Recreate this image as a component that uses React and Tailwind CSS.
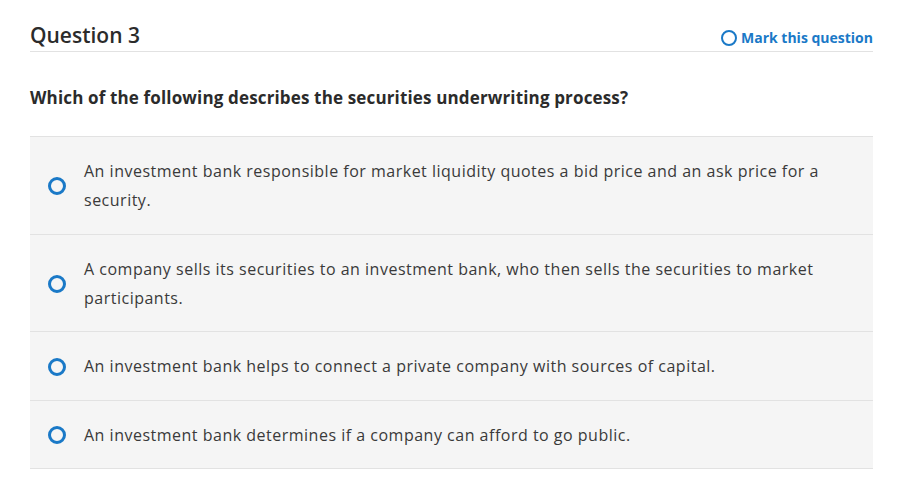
import React, { useState } from "react";

const options = [
  "An investment bank responsible for market liquidity quotes a bid price and an ask price for a security.",
  "A company sells its securities to an investment bank, who then sells the securities to market participants.",
  "An investment bank helps to connect a private company with sources of capital.",
  "An investment bank determines if a company can afford to go public.",
];

function Radio({ size = 18, stroke = 3 }) {
  return (
    <span
      className="inline-block shrink-0 rounded-full border-[#1a79c7]"
      style={{ width: size, height: size, borderWidth: stroke }}
    />
  );
}

export default function App() {
  const [selected, setSelected] = useState(null);

  return (
    <div
      className="w-[908px] h-[501px] bg-white pl-[30px] pr-[35px] pt-[23px] text-[#333]"
      style={{ fontFamily: "'Open Sans', sans-serif" }}
    >
      <div className="flex items-end justify-between border-b border-[#e2e2e2] pb-[4px]">
        <h2 className="text-[21px] leading-[24px] font-semibold text-[#2b2b2b]">Question 3</h2>
        <button className="flex items-center gap-[4px] text-[14px] font-bold text-[#1a79c7] leading-[18px]">
          <Radio size={16} stroke={2} />
          Mark this question
        </button>
      </div>

      <p className="mt-[34px] text-[17px] tracking-[0.15px] font-bold text-[#2b2b2b] leading-[24px]">
        Which of the following describes the securities underwriting process?
      </p>

      <ul className="mt-[26px] border-t border-[#e2e2e2]">
        {options.map((text, i) => (
          <li
            key={i}
            onClick={() => setSelected(i)}
            className="flex items-center gap-[18px] bg-[#f5f5f5] border-b border-[#e2e2e2] pt-[20px] pb-[18.5px] pl-[18px] pr-[40px] cursor-pointer"
          >
            <Radio />
            <span className="text-[16px] tracking-[0.5px] leading-[29px] text-[#3a3a3a]">{text}</span>
          </li>
        ))}
      </ul>
    </div>
  );
}
